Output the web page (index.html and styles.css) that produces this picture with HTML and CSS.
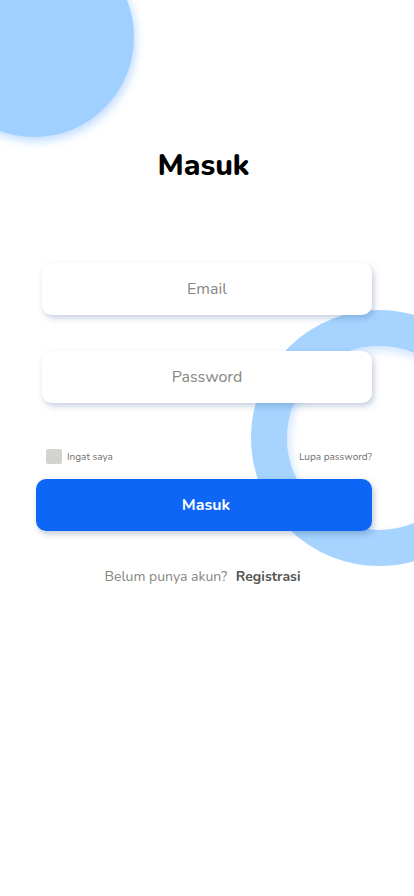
FILE: index.html
```html
<html>
<head>
    <meta name="viewport" content="width=device-width, initial-scale=1" />
<title>Masuk</title>
<link rel="stylesheet" href="styles.css">
</head>

<body>
<div class="page">
    <div class="blob blob-top"></div>
    <div class="blob ring"></div>

    <h1 class="title">Masuk</h1>

    <form class="login" onsubmit="return false">
        <input class="field" type="email" placeholder="Email" />
        <input class="field" type="password" placeholder="Password" />

        <div class="options">
            <label class="remember"><span class="check"></span>Ingat saya</label>
            <a class="forgot" href="#">Lupa password?</a>
        </div>

        <button class="submit" type="submit">Masuk</button>
    </form>

    <p class="signup">Belum punya akun? <a href="#">Registrasi</a></p>
</div>
</body>
</html>
```

FILE: styles.css
```css
body { margin: 0; background: #fff; font-family: "Nunito", "Lato", "Noto Sans", sans-serif; }
.page { position: relative; width: 414px; height: 896px; overflow: hidden; }

.blob { position: absolute; border-radius: 50%; z-index: 0; }
.blob-top { width: 200px; height: 200px; left: -66px; top: -63px; background: #9fd0ff; box-shadow: 2px 4px 10px rgba(110, 175, 255, 0.45); }
.ring { width: 184px; height: 184px; left: 251px; top: 310px; border: 36px solid #a6d4ff; box-shadow: inset 2px 4px 10px rgba(110, 175, 255, 0.35); }

.title { position: relative; margin: 0; padding: 146px 7px 0 0; text-align: center; font-size: 30px; font-weight: 800; color: #000; line-height: 40px; }

.login { position: relative; z-index: 1; display: flex; flex-direction: column; margin: 77px 42px 0 42px; }
.field { height: 52px; border: none; border-radius: 10px; background: #fff; box-shadow: 2px 3px 6px rgba(40, 80, 130, 0.28); text-align: center; font-family: inherit; font-size: 16px; color: #333; outline: none; }
.field + .field { margin-top: 36px; }
.field::placeholder { color: #86867f; }

.options { display: flex; justify-content: space-between; align-items: center; margin: 46px 0 0 4px; font-size: 10px; color: #707070; }
.remember { display: flex; align-items: center; gap: 5px; }
.check { width: 16px; height: 15px; border-radius: 2px; background: #d4d4cf; }
.forgot { color: #707070; text-decoration: none; }

.submit { height: 52px; margin: 15px 0 0 -6px; padding-left: 10px; border: none; border-radius: 10px; background: #0e66f6; box-shadow: 2px 3px 6px rgba(40, 80, 130, 0.3); color: #fff; font-family: inherit; font-size: 16px; font-weight: 700; }

.signup { position: relative; z-index: 1; margin: 36px 0 0 0; padding-right: 9px; text-align: center; font-size: 14px; color: #86867f; }
.signup a { margin-left: 5px; color: #555550; font-weight: 700; text-decoration: none; }
```
